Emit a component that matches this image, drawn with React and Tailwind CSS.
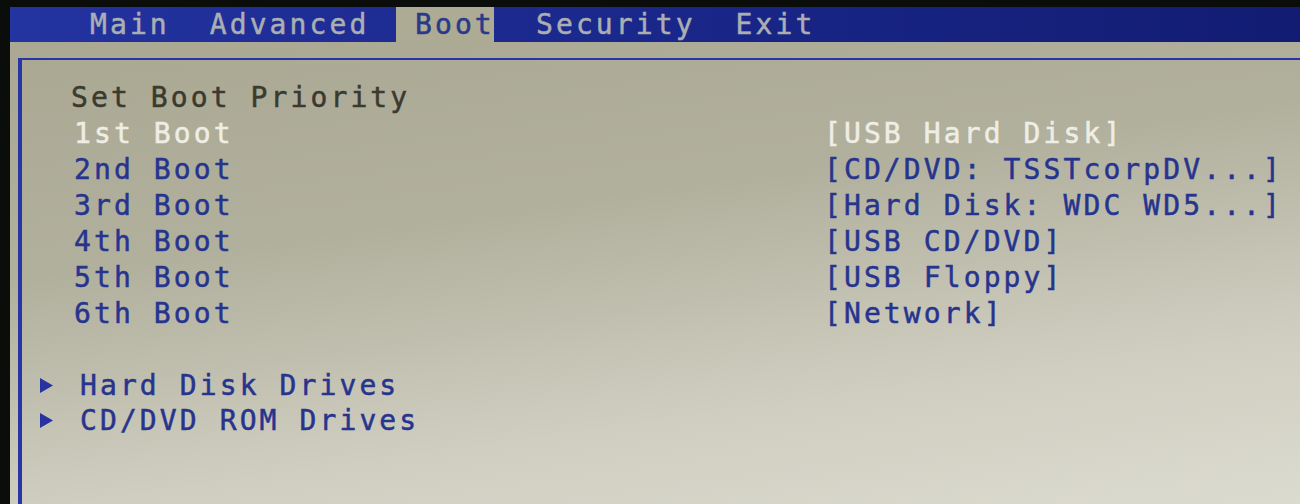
import React from "react";

const bootOrder = [
    { label: "1st Boot", value: "[USB Hard Disk]", active: true },
    { label: "2nd Boot", value: "[CD/DVD: TSSTcorpDV...]" },
    { label: "3rd Boot", value: "[Hard Disk: WDC WD5...]" },
    { label: "4th Boot", value: "[USB CD/DVD]" },
    { label: "5th Boot", value: "[USB Floppy]" },
    { label: "6th Boot", value: "[Network]" },
];

const drives = ["Hard Disk Drives", "CD/DVD ROM Drives"];

function Arrow() {
    return (
        <svg width="13" height="15" viewBox="0 0 13 15" className="shrink-0">
            <polygon points="0,0 13,7.5 0,15" fill="#2733a0" />
        </svg>
    );
}

export default function App() {
    return (
        <div
            className="w-[1300px] h-[504px] bg-[#0b0d0b] flex flex-col overflow-hidden text-[28px] tracking-[3.1px] whitespace-pre [-webkit-text-stroke:0.5px_currentColor]"
            style={{ fontFamily: '"DejaVu Sans Mono", "Liberation Mono", monospace' }}
        >
            <div className="h-[7px] shrink-0" />
            <div className="flex flex-1">
                <div className="w-[10px] shrink-0" />
                <div className="flex-1 flex flex-col bg-[linear-gradient(172deg,#a9a791_0%,#b1b09d_40%,#cfcec1_75%,#dcdbcf_100%)]">
                    {/* menu tabs */}
                    <div className="h-[35px] shrink-0 flex items-center pl-[80px] bg-[linear-gradient(90deg,#2333a0,#1a278a_50%,#121c72)] text-[#a9afb2]">
                        <span className="w-[306px] shrink-0">Main  Advanced</span>
                        <span className="w-[98px] h-full flex items-center pl-[19px] bg-[#aeab95] text-[#2a3a8a]">Boot</span>
                        <span className="pl-[42px]">Security  Exit</span>
                    </div>

                    <div className="flex-1 ml-[8px] mt-[16px] border-t-2 border-l-4 border-[#2735a6] pt-[20px]">
                        <div className="h-[36px] flex items-center pl-[49px] text-[#3a3a2f]">Set Boot Priority</div>
                        {bootOrder.map((row) => (
                            <div
                                key={row.label}
                                className={`h-[36px] flex items-center pl-[52px] ${row.active ? "text-[#efeee4]" : "text-[#27348e]"}`}
                            >
                                <span className="w-[750px] shrink-0">{row.label}</span>
                                <span>{row.value}</span>
                            </div>
                        ))}
                        <div className="h-[36px]" />
                        {drives.map((d) => (
                            <div key={d} className="h-[35px] flex items-center pl-[18px] gap-[27px] text-[#27348e]">
                                <Arrow />
                                <span>{d}</span>
                            </div>
                        ))}
                    </div>
                </div>
            </div>
        </div>
    );
}
